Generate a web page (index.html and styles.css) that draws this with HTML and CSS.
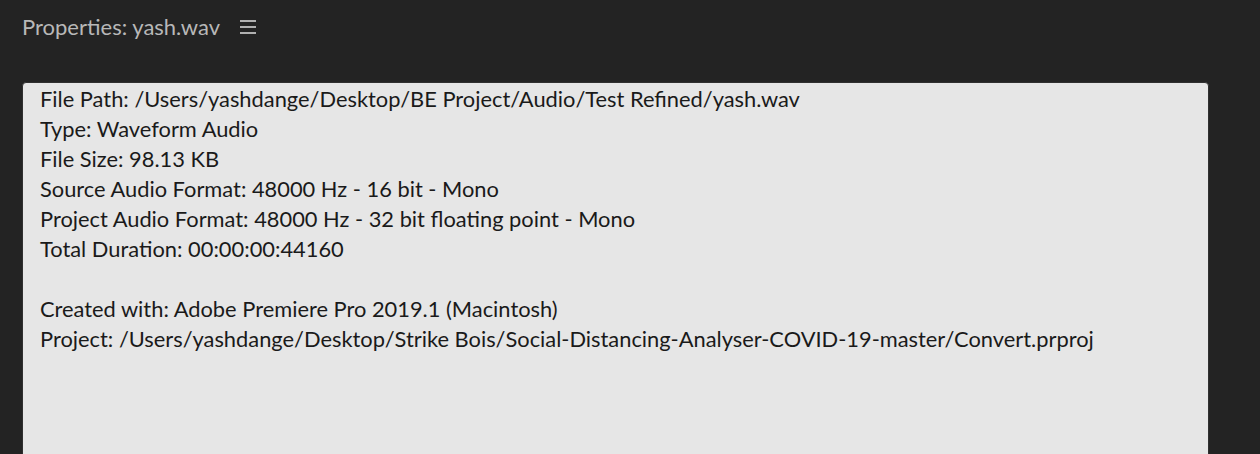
FILE: index.html
```html
<!DOCTYPE html>
<html>
<head>
<meta charset="utf-8">
<link rel="stylesheet" href="styles.css">
</head>
<body>
<div class="panel">
  <div class="header">
    <span class="title">Properties: yash.wav</span>
    <svg class="menu" width="16" height="14" viewBox="0 0 16 14"><path d="M0 1H16M0 7H16M0 13H16" stroke="#b0b0b0" stroke-width="2"/></svg>
  </div>
  <div class="box">
    <div class="line">File Path: /Users/yashdange/Desktop/BE Project/Audio/Test Refined/yash.wav</div>
    <div class="line">Type: Waveform Audio</div>
    <div class="line">File Size: 98.13 KB</div>
    <div class="line">Source Audio Format: 48000 Hz - 16 bit - Mono</div>
    <div class="line">Project Audio Format: 48000 Hz - 32 bit floating point - Mono</div>
    <div class="line">Total Duration: 00:00:00:44160</div>
    <div class="line empty"></div>
    <div class="line">Created with: Adobe Premiere Pro 2019.1 (Macintosh)</div>
    <div class="line">Project: /Users/yashdange/Desktop/Strike Bois/Social-Distancing-Analyser-COVID-19-master/Convert.prproj</div>
  </div>
</div>
</body>
</html>
```
FILE: styles.css
```css
html, body {
  margin: 0;
  padding: 0;
  background: #232323;
  height: 454px;
  overflow: hidden;
}
.panel {
  font-family: Lato, "Noto Sans", sans-serif;
  padding: 0 0 0 22px;
}
.header {
  display: flex;
  align-items: center;
  height: 54px;
  gap: 20px;
}
.title {
  color: #b8b8b8;
  font-size: 22px;
  margin-top: -2px;
}
.menu {
  display: block;
  margin-top: 0;
}
.box {
  margin-top: 28px;
  width: 1187px;
  height: 380px;
  box-sizing: border-box;
  background: #e6e6e6;
  border: 1px solid #303030;
  border-radius: 4px;
  padding: 1px 0 0 17px;
  overflow: hidden;
}
.line {
  color: #1a1a1a;
  font-size: 21.85px;
  line-height: 30px;
  height: 30px;
  white-space: nowrap;
}
```
